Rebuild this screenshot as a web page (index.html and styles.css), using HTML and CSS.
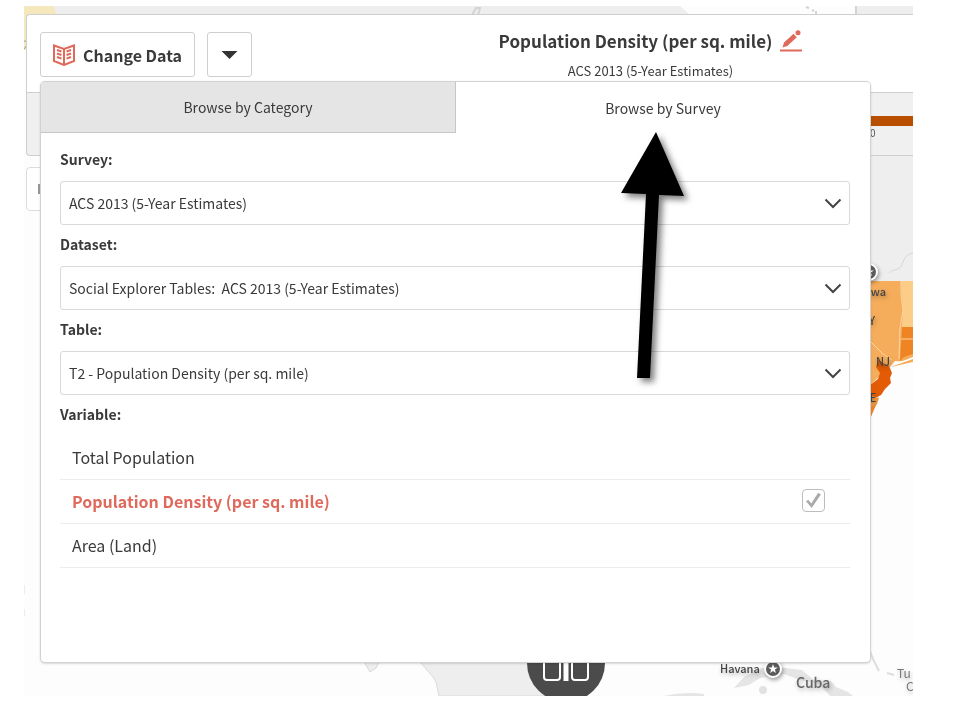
FILE: index.html
```html
<!DOCTYPE html>
<html lang="en">
<head>
<meta charset="utf-8">
<title>Population Density (per sq. mile)</title>
<link rel="stylesheet" href="styles.css">
</head>
<body>
<main class="viewer">
  <svg class="map" viewBox="24 6 889 690" preserveAspectRatio="xMaxYMin slice" aria-hidden="true">
    <defs>
      <g id="capital">
        <circle r="8" fill="#5c5c5c" stroke="#fff" stroke-width="2"/>
        <path d="M0-5L1.200-1.600 4.800-1.500 1.900.6 2.900 4 0 2-2.900 4-1.900.6-4.800-1.500-1.200-1.600Z" fill="#fff"/>
      </g>
    </defs>
    <rect x="24" y="6" width="889" height="690" fill="#fdfdfd"/>
    <path d="M24 6H680L690 15H24Z M856 6H913V282H860V15H856Z" fill="#eeeeee"/>
    <path d="M24 6H53L57 15H27V50H24Z" fill="#f6e8bd"/>
    <path d="M472 15l4-7h4l-2 7M806 7l3 1M812 10l2 1M816 11v4M856 6v9" fill="none" stroke="#d4d4d4" stroke-width="2"/>
    <path d="M24 41q4 0 3 4l-3 4" fill="none" stroke="#999" stroke-width="1"/>
    <path d="M913 253q-8 2-10 9t-8 8-5 3" fill="none" stroke="#d6d6d6" stroke-width="1"/>
    <path d="M860 281H913V362L895 361 889 368 870 385Z" fill="#f5ad5b"/>
    <path d="M901 281H913V327H902L903 310Z" fill="#fccd86"/>
    <path d="M902 327H913V354L904 357 900 361Z" fill="#ef8424"/>
    <path d="M901 281v13l2 16-3 18-1 31M901 339h12M860 340l10 1 6 6 7 7 9 6" fill="none" stroke="#fbd7a5" stroke-width="1"/>
    <path d="M889 368l6-4 18-7v6l-20 5Z" fill="#fff"/>
    <path d="M893 366l20-7v3l-22 5Z" fill="#f5ad5b"/>
    <path d="M860 388l10-3 8-6 2-6-4-6 2-7 11 6 3 7-2 5 1 5-6 6-4 6-11 6H860Z" fill="#e35c05"/>
    <path d="M860 396l10-1 9 3-2 6-3 4-4 11H860Z" fill="#f39a43"/>
    <path d="M870 407l6-2-3 7-3 7Z" fill="#ef8424"/>
    <path d="M364 662h15l-3 6-6 4Z M420 662h130v34H439l-3-14-3-5Z" fill="#eeeeee" stroke="#dadada" stroke-width="1"/>
    <path d="M664 696q20-5 40-2v2ZM734 688l10-11 18-9 24 0 16 2 12 10 17 1 5 6 12 5 5 4h-23l-11-12-19-4-16-6-24 4-11 7Z" fill="#e5e5e5"/>
    <circle cx="763" cy="690" r="4" fill="#e2e2e2"/>
    <path d="M870 651l3 8 6 12M887 673l7 2" fill="none" stroke="#dedede" stroke-width="2"/>
    <path d="M24 585v9M24 609v7" fill="none" stroke="#ececec" stroke-width="2"/>
    <circle cx="566" cy="663" r="39" fill="#4b4b4b"/>
    <g fill="none" stroke="#fff" stroke-width="2">
      <rect x="544" y="640" width="16" height="40" rx="3"/>
      <path d="M566 640v41" stroke-width="5"/>
      <rect x="572" y="640" width="16" height="40" rx="3"/>
    </g>
    <g class="halo">
      <use href="#capital" x="869" y="272"/>
      <use href="#capital" x="773" y="669"/>
    </g>
    <g class="place">
      <text x="848" y="296">Ottawa</text>
      <text x="861" y="325">NY</text>
      <text x="876" y="366">NJ</text>
      <text x="862" y="402">DE</text>
      <text x="720" y="673">Havana</text>
      <text x="796" y="688" class="place-country">Cuba</text>
      <text x="897" y="678" class="place-light">Tu</text>
      <text x="906" y="691" class="place-light">C</text>
    </g>
  </svg>

  <div class="chrome">
    <header class="toolbar">
      <button class="tool" type="button">
        <svg class="book" viewBox="0 0 22 22" aria-hidden="true">
          <path d="M1 1.500L11 5 21 1.500V17L11 21 1 17Z M11 5V21" />
          <path d="M4 6l4.500 1.500M4 9.500l4.500 1.500M4 13l4.500 1.500M18 6l-4.500 1.500M18 9.500l-4.500 1.500M18 13l-4.500 1.500"/>
        </svg>
        Change Data
      </button>
      <button class="tool tool-menu" type="button" aria-label="More">
        <svg class="caret" viewBox="0 0 18 9" aria-hidden="true"><path d="M0 0H18L9 9Z"/></svg>
      </button>
      <div class="heading">
        <h1>Population Density (per sq. mile)
          <svg class="pencil" viewBox="0 0 22 22" aria-hidden="true"><path d="M0 19.500H22V21.500H0ZM2.500 17.500L4 12.500 13.500 3.800 16.800 7.200 7.300 16Z"/><circle cx="18" cy="2.800" r="2.500"/></svg>
        </h1>
        <p>ACS 2013 (5-Year Estimates)</p>
      </div>
    </header>
    <div class="legend"><div class="legend-end"><i></i>0</div></div>
    <div class="search"><i></i></div>
  </div>

  <section class="panel">
    <nav class="tabs">
      <button class="tab" type="button">Browse by Category</button>
      <button class="tab tab-active" type="button">Browse by Survey</button>
    </nav>
    <form class="fields">
      <label class="name" for="survey">Survey:</label>
      <div class="pick">
        <select id="survey"><option>ACS 2013 (5-Year Estimates)</option></select>
        <svg viewBox="0 0 18 11" aria-hidden="true"><path d="M1.500 1.500L9 9 16.500 1.500"/></svg>
      </div>
      <label class="name" for="dataset">Dataset:</label>
      <div class="pick">
        <select id="dataset"><option>Social Explorer Tables:&nbsp; ACS 2013 (5-Year Estimates)</option></select>
        <svg viewBox="0 0 18 11" aria-hidden="true"><path d="M1.500 1.500L9 9 16.500 1.500"/></svg>
      </div>
      <label class="name" for="table">Table:</label>
      <div class="pick">
        <select id="table"><option>T2 - Population Density (per sq. mile)</option></select>
        <svg viewBox="0 0 18 11" aria-hidden="true"><path d="M1.500 1.500L9 9 16.500 1.500"/></svg>
      </div>
      <div class="name">Variable:</div>
      <ul class="variables">
        <li>Total Population</li>
        <li class="chosen"><label for="density">Population Density (per sq. mile)</label><input id="density" type="checkbox" checked></li>
        <li>Area (Land)</li>
      </ul>
    </form>
  </section>

  <svg class="arrow" viewBox="0 0 80 260" aria-hidden="true"><path d="M41 4L69 68 44 67 35 250H22L31 66 6 65Z"/></svg>
</main>
</body>
</html>
```
FILE: styles.css
```css
* { box-sizing: border-box; }

body {
  margin: 0;
  padding: 6px 47px 24px 24px;
  background: #fff;
  color: #3a3a3a;
  font-family: "Noto Sans CJK SC", "Noto Sans", sans-serif;
  font-size: 14px;
  line-height: 20px;
}

button, select { font: inherit; color: inherit; }

.viewer {
  position: relative;
  display: grid;
  overflow: hidden;
}

.map {
  position: absolute;
  inset: 0;
  width: 100%;
  height: 100%;
}

.halo { filter: drop-shadow(1px 2px 2px rgba(0, 0, 0, 0.4)); }

.place {
  font-size: 11px;
  font-weight: 500;
  fill: #444;
  filter: drop-shadow(1px 2px 2px rgba(0, 0, 0, 0.3));
}
.place-country { font-size: 14px; fill: #666; }
.place-light { font-weight: 400; font-size: 12px; fill: #777; }

.chrome {
  grid-area: 1 / 1;
  position: relative;
  min-width: 0;
  padding: 8px 0 0 2px;
}

.toolbar {
  display: flex;
  align-items: flex-start;
  gap: 12px;
  height: 79px;
  padding: 15px 0 0 13px;
  background: #fff;
  border: solid #cfcfcf;
  border-width: 1px 0 1px 1px;
  border-radius: 4px 0 0 0;
}

.tool {
  display: flex;
  align-items: center;
  gap: 8px;
  height: 45px;
  margin-top: 2px;
  padding: 0 12px;
  background: #fff;
  border: 1px solid #cfcfcf;
  border-radius: 3px;
  font-size: 16px;
  font-weight: 700;
  white-space: nowrap;
}
.tool-menu { padding: 0 13px; }
.book { width: 22px; height: 22px; fill: none; stroke: #df6a5c; stroke-width: 2; }
.caret { width: 17px; height: 8px; fill: #333; }

.heading { flex: 1; padding-left: 124px; text-align: center; white-space: nowrap; }
.heading h1 {
  display: flex;
  justify-content: center;
  align-items: center;
  gap: 8px;
  margin: 0;
  font-size: 17px;
  line-height: 20px;
}
.heading p { margin: 9px 0 0; font-size: 13px; }
.pencil { width: 22px; height: 22px; fill: #df6a5c; }

.legend {
  display: flex;
  justify-content: flex-end;
  height: 63px;
  padding-top: 23px;
  background: #f0f0f0;
  border: solid #cfcfcf;
  border-width: 0 0 1px 1px;
  border-radius: 0 0 0 4px;
}
.legend-end { width: 43px; font-size: 10px; line-height: 14px; color: #555; }
.legend-end i { display: block; height: 10px; background: #b84f00; }

.search {
  display: flex;
  align-items: center;
  width: 60px;
  height: 44px;
  margin-top: 11px;
  padding-left: 11px;
  background: #fff;
  border: 1px solid #dcdcdc;
  border-radius: 4px;
}
.search i { width: 2px; height: 10px; background: #999; }

.panel {
  grid-area: 1 / 1;
  position: relative;
  min-width: 0;
  margin: 76px 43px 34px 17px;
  padding-bottom: 94px;
  background: #fff;
  border-radius: 4px;
  box-shadow: 0 0 0 1px #d2d2d2, 0 1px 3px rgba(0, 0, 0, 0.3);
}

.tabs { display: flex; height: 51px; }
.tab {
  flex: 1;
  padding: 0;
  background: #e5e5e5;
  border: solid #c6c6c6;
  border-width: 0 1px 1px 0;
  border-radius: 4px 0 0 0;
}
.tab-active { background: #fff; border: 0; border-radius: 0 4px 0 0; }

.fields { padding: 7px 20px 0 19px; }
.name { display: block; padding: 9px 0 12px; font-weight: 700; }

.pick { display: grid; align-items: center; }
.pick select {
  grid-area: 1 / 1;
  width: 100%;
  height: 44px;
  padding: 0 40px 0 8px;
  appearance: none;
  background: #fff;
  border: 1px solid #d9d9d9;
  border-radius: 3px;
}
.pick svg {
  grid-area: 1 / 1;
  justify-self: end;
  width: 18px;
  height: 11px;
  margin-right: 8px;
  fill: none;
  stroke: #444;
  stroke-width: 2;
  pointer-events: none;
}

.variables { margin: 0; padding: 0; list-style: none; font-size: 16px; }
.variables li {
  display: flex;
  align-items: center;
  justify-content: space-between;
  height: 44px;
  padding: 0 25px 2px 12px;
  border-bottom: 1px solid #ececec;
}
.chosen { color: #df6a5c; font-weight: 700; }
.chosen input {
  width: 23px;
  height: 23px;
  margin: 0;
  appearance: none;
  background: #fff;
  border: 1px solid #bdbdbd;
  border-radius: 4px;
  display: grid;
  place-items: center;
}
.chosen input::before {
  content: "";
  width: 15px;
  height: 15px;
  background: #aaa;
  clip-path: polygon(0 55%, 15% 45%, 35% 70%, 80% 0, 100% 8%, 38% 100%);
}

.arrow {
  position: absolute;
  top: 122px;
  left: calc(100% - 298px);
  width: 80px;
  height: 260px;
  filter: drop-shadow(4px 4px 3px rgba(0, 0, 0, 0.5));
  pointer-events: none;
}
```
